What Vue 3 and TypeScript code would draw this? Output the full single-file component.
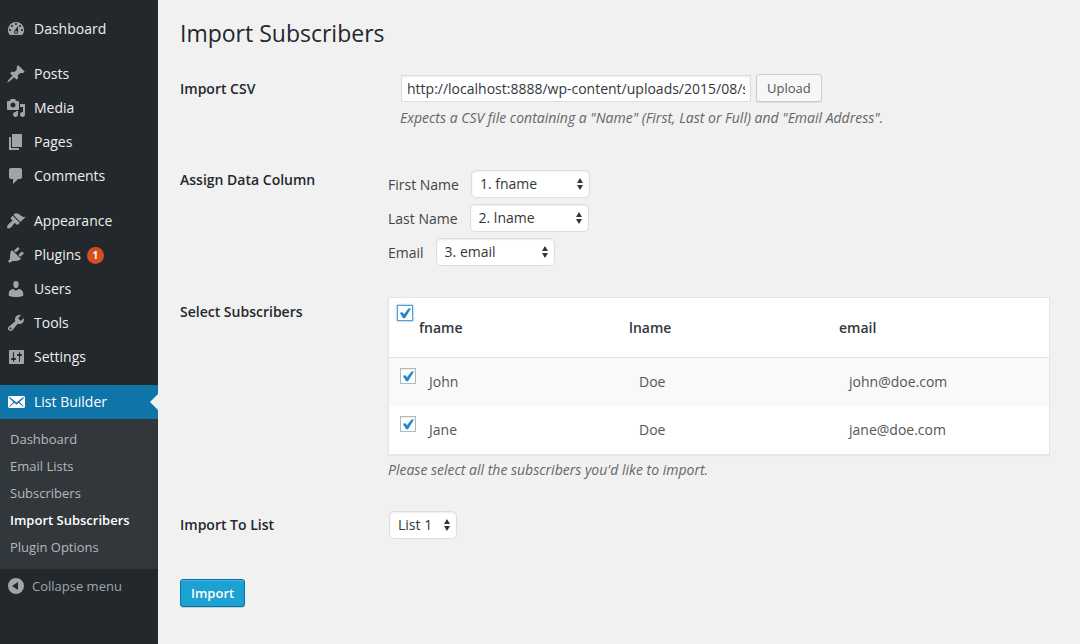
<script setup lang="ts">
import { computed, ref } from 'vue'

interface MenuItem {
  label: string
  icon: string
  badge?: number
  gap?: boolean
  current?: boolean
}

const menu: MenuItem[] = [
  {
    label: 'Dashboard',
    icon: 'M3.76 16h12.48A7.998 7.998 0 0 0 10 3a7.998 7.998 0 0 0-6.24 13zM10 4c.55 0 1 .45 1 1s-.45 1-1 1-1-.45-1-1 .45-1 1-1zM6 6c.55 0 1 .45 1 1s-.45 1-1 1-1-.45-1-1 .45-1 1-1zm8 0c.55 0 1 .45 1 1s-.45 1-1 1-1-.45-1-1 .45-1 1-1zm-5.37 5.55L12 7v6c0 1.1-.9 2-2 2s-2-.9-2-2c0-.57.24-1.08.63-1.45zM4 10c.55 0 1 .45 1 1s-.45 1-1 1-1-.45-1-1 .45-1 1-1zm12 0c.55 0 1 .45 1 1s-.45 1-1 1-1-.45-1-1 .45-1 1-1zm-5 3c0-.55-.45-1-1-1s-1 .45-1 1 .45 1 1 1 1-.45 1-1z',
  },
  {
    label: 'Posts',
    gap: true,
    icon: 'M10.44 3.02l1.82-1.82 6.36 6.35-1.83 1.82c-1.05-.68-2.48-.57-3.41.36l-.75.75c-.92.93-1.04 2.35-.35 3.41l-1.83 1.82-2.41-2.41-2.8 2.79c-.42.42-3.38 2.71-3.8 2.29s1.86-3.39 2.28-3.81l2.79-2.79L4.1 9.36l1.83-1.82c1.05.69 2.48.57 3.4-.36l.75-.75c.93-.92 1.05-2.35.36-3.41z',
  },
  {
    label: 'Media',
    icon: 'M13 11V4c0-.55-.45-1-1-1h-1.67L9 1H5L3.67 3H2c-.55 0-1 .45-1 1v7c0 .55.45 1 1 1h10c.55 0 1-.45 1-1zM7 4.5c1.38 0 2.5 1.12 2.5 2.5S8.38 9.5 7 9.5 4.5 8.38 4.5 7 5.62 4.5 7 4.5zM14 6h5v10.5c0 1.38-1.12 2.5-2.5 2.5S14 17.88 14 16.5s1.12-2.5 2.5-2.5c.17 0 .34.02.5.05V9h-3V6zm-4 8.05V13h2v3.5c0 1.38-1.12 2.5-2.5 2.5S7 17.88 7 16.5 8.12 14 9.5 14c.17 0 .34.02.5.05z',
  },
  { label: 'Pages', icon: 'M6 15V2h10v13H6zm-1 1h8v2H3V5h2v11z' },
  {
    label: 'Comments',
    icon: 'M5 2h9c1.1 0 2 .9 2 2v7c0 1.1-.9 2-2 2h-2l-5 5v-5H5c-1.1 0-2-.9-2-2V4c0-1.1.9-2 2-2z',
  },
  {
    label: 'Appearance',
    gap: true,
    icon: 'M14.48 11.06L7.41 3.99l1.5-1.5c.5-.56 2.3-.47 3.51.32 1.21.8 1.43 1.28 2.91 2.1 1.18.64 2.45 1.26 4.45.85zm-.71.71L6.7 4.7 4.93 6.47c-.39.39-.39 1.02 0 1.41l1.06 1.06c.39.39.39 1.03 0 1.42-.6.6-1.43 1.11-2.21 1.69-.35.26-.7.53-1.01.84C1.43 14.23.4 16.08 1.4 17.07c.99 1 2.84-.03 4.18-1.36.31-.31.58-.66.85-1.02.57-.78 1.08-1.61 1.69-2.21.39-.39 1.02-.39 1.41 0l1.06 1.06c.39.39 1.02.39 1.41 0z',
  },
  {
    label: 'Plugins',
    badge: 1,
    icon: 'M13.11 4.36L9.87 7.6 8 5.73l3.24-3.24c.35-.34 1.05-.2 1.56.32.52.51.66 1.21.31 1.55zm-8 1.77l.91-1.12 9.01 9.01-1.19.84c-.71.71-2.63 1.16-3.82 1.16H6.14L4.9 17.26c-.59.59-1.54.59-2.12 0-.59-.58-.59-1.53 0-2.12l1.24-1.24v-3.88c0-1.13.4-3.19 1.09-3.89zm7.26 3.97l3.24-3.24c.34-.35 1.04-.21 1.55.31.52.51.66 1.21.31 1.55l-3.24 3.25z',
  },
  {
    label: 'Users',
    icon: 'M10 9.25c-2.27 0-2.73-3.44-2.73-3.44C7 4.02 7.82 2 9.97 2c2.16 0 2.98 2.02 2.71 3.81 0 0-.41 3.44-2.68 3.44zm0 2.57L12.72 10c2.39 0 4.52 2.33 4.52 4.53v2.49s-3.65 1.13-7.24 1.13c-3.65 0-7.24-1.13-7.24-1.13v-2.49c0-2.25 1.94-4.48 4.47-4.48z',
  },
  {
    label: 'Tools',
    icon: 'M16.68 9.77c-1.34 1.34-3.3 1.67-4.95.99l-5.41 6.52c-.99.99-2.59.99-3.58 0s-.99-2.59 0-3.57l6.52-5.42c-.68-1.65-.35-3.61.99-4.95 1.28-1.28 3.12-1.62 4.72-1.06l-2.89 2.89 2.82 2.82 2.86-2.87c.53 1.58.18 3.39-1.08 4.65zM3.81 16.21c.4.39 1.04.39 1.43 0 .4-.4.4-1.04 0-1.43-.39-.4-1.03-.4-1.43 0-.39.39-.39 1.03 0 1.43z',
  },
  {
    label: 'Settings',
    icon: 'M18 16V4c0-.55-.45-1-1-1H4c-.55 0-1 .45-1 1v12c0 .55.45 1 1 1h13c.55 0 1-.45 1-1zM8 11h1c.55 0 1 .45 1 1s-.45 1-1 1H8v1.5c0 .28-.22.5-.5.5s-.5-.22-.5-.5V13H6c-.55 0-1-.45-1-1s.45-1 1-1h1V5.5c0-.28.22-.5.5-.5s.5.22.5.5V11zm5-2h-1c-.55 0-1-.45-1-1s.45-1 1-1h1V5.5c0-.28.22-.5.5-.5s.5.22.5.5V7h1c.55 0 1 .45 1 1s-.45 1-1 1h-1v5.5c0 .28-.22.5-.5.5s-.5-.22-.5-.5V9z',
  },
  {
    label: 'List Builder',
    gap: true,
    current: true,
    icon: 'M19 14.5v-9c0-.83-.67-1.5-1.5-1.5H3.49c-.83 0-1.5.67-1.5 1.5v9c0 .83.67 1.5 1.5 1.5H17.5c.83 0 1.5-.67 1.5-1.5zm-1.31-9.11c.33.33.15.67-.03.84L13.6 9.95l3.9 4.06c.12.14.2.36.06.51-.13.16-.43.15-.56.05l-4.37-3.73-2.14 1.95-2.13-1.95-4.37 3.73c-.13.1-.43.11-.56-.05-.14-.15-.06-.37.06-.51l3.9-4.06-4.06-3.72c-.18-.17-.36-.51-.03-.84s.67-.17.95.07l6.24 5.04 6.25-5.04c.28-.24.62-.4.95-.07z',
  },
]

const submenu = ['Dashboard', 'Email Lists', 'Subscribers', 'Import Subscribers', 'Plugin Options']
const currentPage = 'Import Subscribers'

const csvUrl = ref('http://localhost:8888/wp-content/uploads/2015/08/subscribers.csv')
const columns = ['fname', 'lname', 'email']
const assignments = ref([
  { id: 'first-name', label: 'First Name', column: 0 },
  { id: 'last-name', label: 'Last Name', column: 1 },
  { id: 'email', label: 'Email', column: 2 },
])
const subscribers = ref([
  { selected: true, cells: ['John', 'Doe', 'john@doe.com'] },
  { selected: true, cells: ['Jane', 'Doe', 'jane@doe.com'] },
])
const allSelected = computed({
  get: () => subscribers.value.every((s) => s.selected),
  set: (on: boolean) => subscribers.value.forEach((s) => (s.selected = on)),
})
const list = ref('List 1')
</script>

<template>
  <div class="admin">
    <nav class="sidebar" aria-label="Main menu">
      <ul class="menu">
        <li v-for="item in menu" :key="item.label" :class="{ gap: item.gap }">
          <a href="#" class="menu-link" :class="{ current: item.current }">
            <svg class="icon" viewBox="0 0 20 20" aria-hidden="true">
              <path :d="item.icon" fill-rule="evenodd" />
            </svg>
            <span>{{ item.label }}</span>
            <span v-if="item.badge" class="badge">{{ item.badge }}</span>
          </a>
          <ul v-if="item.current" class="submenu">
            <li v-for="page in submenu" :key="page">
              <a href="#" :class="{ active: page === currentPage }">{{ page }}</a>
            </li>
          </ul>
        </li>
      </ul>
      <button type="button" class="collapse">
        <svg class="icon" viewBox="0 0 20 20" aria-hidden="true">
          <path fill-rule="evenodd" d="M10 2a8 8 0 1 0 0 16 8 8 0 0 0 0-16zM12 6v8l-6-4z" />
        </svg>
        <span>Collapse menu</span>
      </button>
    </nav>

    <main class="content">
      <h1>Import Subscribers</h1>
      <form @submit.prevent>
        <div class="row csv-row">
          <label class="heading" for="csv">Import CSV</label>
          <div class="field inset">
            <div class="upload">
              <input id="csv" v-model="csvUrl" type="text" class="text" />
              <button type="button" class="button">Upload</button>
            </div>
            <p class="description">
              Expects a CSV file containing a "Name" (First, Last or Full) and "Email Address".
            </p>
          </div>
        </div>

        <div class="row">
          <div class="heading">Assign Data Column</div>
          <div class="field assign">
            <div v-for="a in assignments" :key="a.id" class="assignment">
              <label :for="a.id">{{ a.label }}</label>
              <span class="select">
                <select :id="a.id" v-model="a.column">
                  <option v-for="(c, i) in columns" :key="c" :value="i">{{ i + 1 }}. {{ c }}</option>
                </select>
                <svg viewBox="0 0 8 14" aria-hidden="true"><path d="M4 1l3 5H1zM4 13l3-5H1z" /></svg>
              </span>
            </div>
          </div>
        </div>

        <div class="row">
          <div class="heading">Select Subscribers</div>
          <div class="field">
            <table>
              <thead>
                <tr>
                  <th class="check">
                    <input v-model="allSelected" type="checkbox" class="box focused" aria-label="Select all" />
                  </th>
                  <th v-for="c in columns" :key="c" scope="col">{{ c }}</th>
                </tr>
              </thead>
              <tbody>
                <tr v-for="s in subscribers" :key="s.cells[2]">
                  <td class="check">
                    <input v-model="s.selected" type="checkbox" class="box" :aria-label="'Select ' + s.cells[0]" />
                  </td>
                  <td v-for="(cell, i) in s.cells" :key="i">{{ cell }}</td>
                </tr>
              </tbody>
            </table>
            <p class="description">Please select all the subscribers you'd like to import.</p>
          </div>
        </div>

        <div class="row">
          <label class="heading" for="list">Import To List</label>
          <div class="field list-field">
            <span class="select small">
              <select id="list" v-model="list">
                <option>List 1</option>
              </select>
              <svg viewBox="0 0 8 14" aria-hidden="true"><path d="M4 1l3 5H1zM4 13l3-5H1z" /></svg>
            </span>
          </div>
        </div>

        <button type="submit" class="button primary">Import</button>
      </form>
    </main>
  </div>
</template>

<style>
body {
  background: #f1f1f1;
}
</style>

<style scoped>
.admin,
.admin * {
  box-sizing: border-box;
}
.admin {
  display: flex;
  min-height: 100vh;
  font-family: 'Open Sans', 'Noto Sans', sans-serif;
  font-size: 14px;
  line-height: 20px;
  color: #444;
  background: #f1f1f1;
}
ul {
  list-style: none;
  margin: 0;
  padding: 0;
}
button,
input,
select {
  font-family: inherit;
}

.sidebar {
  flex: 0 0 158px;
  padding-top: 12px;
  background: #23282d;
}
.gap {
  margin-top: 11px;
}
.menu-link,
.collapse {
  display: flex;
  align-items: center;
  height: 34px;
  padding-left: 6px;
}
.menu-link {
  position: relative;
  gap: 8px;
  color: #eee;
  font-weight: 500;
  text-decoration: none;
}
.icon {
  width: 20px;
  height: 20px;
  flex: none;
  fill: #a0a5aa;
}
.menu-link.current {
  background: #0f74a8;
  color: #fff;
}
.current .icon {
  fill: #fff;
}
.menu-link.current::after {
  content: '';
  position: absolute;
  right: 0;
  top: 9px;
  border: 8px solid transparent;
  border-left-width: 0;
  border-right-color: #f1f1f1;
}
.badge {
  width: 17px;
  height: 17px;
  margin-left: -2px;
  border-radius: 50%;
  background: #d54e21;
  color: #fff;
  font-size: 10px;
  font-weight: 700;
  line-height: 17px;
  text-align: center;
}
.submenu {
  padding: 7px 0 8px;
  background: #32373c;
}
.submenu a {
  display: block;
  padding-left: 10px;
  font-size: 13px;
  line-height: 27px;
  font-weight: 500;
  color: #b4b9be;
  text-decoration: none;
}
.submenu a.active {
  color: #fff;
  font-weight: 600;
}
.collapse {
  width: 100%;
  gap: 6px;
  border: 0;
  background: none;
  color: #a0a5aa;
  font-size: 13px;
  font-weight: 500;
}

.content {
  flex: 1;
  min-width: 0;
  padding: 19px 30px 20px 22px;
}
h1 {
  margin: 0 0 11px;
  font-size: 23px;
  font-weight: 400;
  line-height: 29px;
  color: #23282d;
}
.row {
  display: grid;
  grid-template-columns: 208px minmax(0, 1fr);
}
.csv-row {
  padding-bottom: 7px;
}
.heading {
  padding-top: 20px;
  font-weight: 600;
  color: #23282d;
}
.field {
  padding: 15px 0;
}
.inset {
  padding-left: 12px;
}
.description {
  margin: 5px 0 0;
  font-style: italic;
  color: #666;
}
.inset .description {
  margin-top: 6px;
}
.upload {
  display: flex;
  align-items: center;
  gap: 5px;
  padding-left: 1px;
}
.text {
  width: 350px;
  height: 27px;
  padding: 3px 5px;
  border: 1px solid #ddd;
  background: #fff;
  box-shadow: inset 0 1px 2px rgba(0, 0, 0, 0.07);
  color: #32373c;
  font-size: 14px;
}
.button {
  height: 28px;
  padding: 0 10px 1px;
  border: 1px solid #ccc;
  border-radius: 3px;
  background: #f7f7f7;
  box-shadow: 0 1px 0 #ddd;
  color: #555;
  font-size: 13px;
}
.button.primary {
  display: block;
  margin-top: 25px;
  border-color: #0073aa;
  background: #1ba1d2;
  box-shadow: inset 0 1px 0 rgba(120, 200, 230, 0.5), 0 1px 0 rgba(0, 0, 0, 0.15);
  color: #fff;
  font-weight: 600;
}

.assign {
  display: grid;
  gap: 6px;
  padding: 20px 0 16px;
}
.assignment {
  display: flex;
  align-items: center;
  gap: 12px;
}
.assignment label {
  padding-top: 2px;
}
.select {
  position: relative;
  display: inline-block;
  width: 119px;
  height: 28px;
}
.select.small {
  width: 68px;
}
.select select {
  appearance: none;
  width: 100%;
  height: 100%;
  padding: 0 18px 2px 8px;
  border: 1px solid #ddd;
  border-radius: 5px;
  background: #fff;
  box-shadow: inset 0 1px 2px rgba(0, 0, 0, 0.07);
  color: #32373c;
  font-size: 14px;
}
.select svg {
  position: absolute;
  right: 6px;
  top: 7px;
  width: 8px;
  height: 14px;
  fill: #32373c;
  pointer-events: none;
}
.list-field {
  display: flex;
  padding: 16px 0 15px 1px;
}

table {
  width: 100%;
  table-layout: fixed;
  border-collapse: separate;
  border-spacing: 0;
  border: 1px solid #e5e5e5;
  background: #fff;
  box-shadow: 0 1px 1px rgba(0, 0, 0, 0.04);
}
th {
  height: 60px;
  padding: 0;
  border-bottom: 1px solid #e1e1e1;
  color: #32373c;
  font-weight: 600;
  text-align: left;
}
td {
  height: 48px;
  padding: 0 10px;
  color: #555;
}
tbody tr:nth-child(odd) {
  background: #f9f9f9;
}
.check {
  width: 30px;
  vertical-align: top;
}
th.check {
  padding: 7px 0 0 8px;
}
td.check {
  padding: 10px 0 0 11px;
}
.box {
  appearance: none;
  display: block;
  width: 16px;
  height: 16px;
  margin: 0;
  border: 1px solid #b4b9be;
  background: #fff;
  box-shadow: inset 0 1px 2px rgba(0, 0, 0, 0.1);
}
.box.focused {
  border-color: #5b9dd9;
  box-shadow: 0 0 2px rgba(30, 140, 190, 0.8);
}
.box:checked::before {
  content: '';
  display: block;
  width: 12px;
  height: 12px;
  margin: 1px;
  background: #1e8cbe;
  clip-path: polygon(8% 50%, 26% 42%, 42% 60%, 78% 12%, 100% 12%, 50% 94%, 34% 94%);
}
</style>
